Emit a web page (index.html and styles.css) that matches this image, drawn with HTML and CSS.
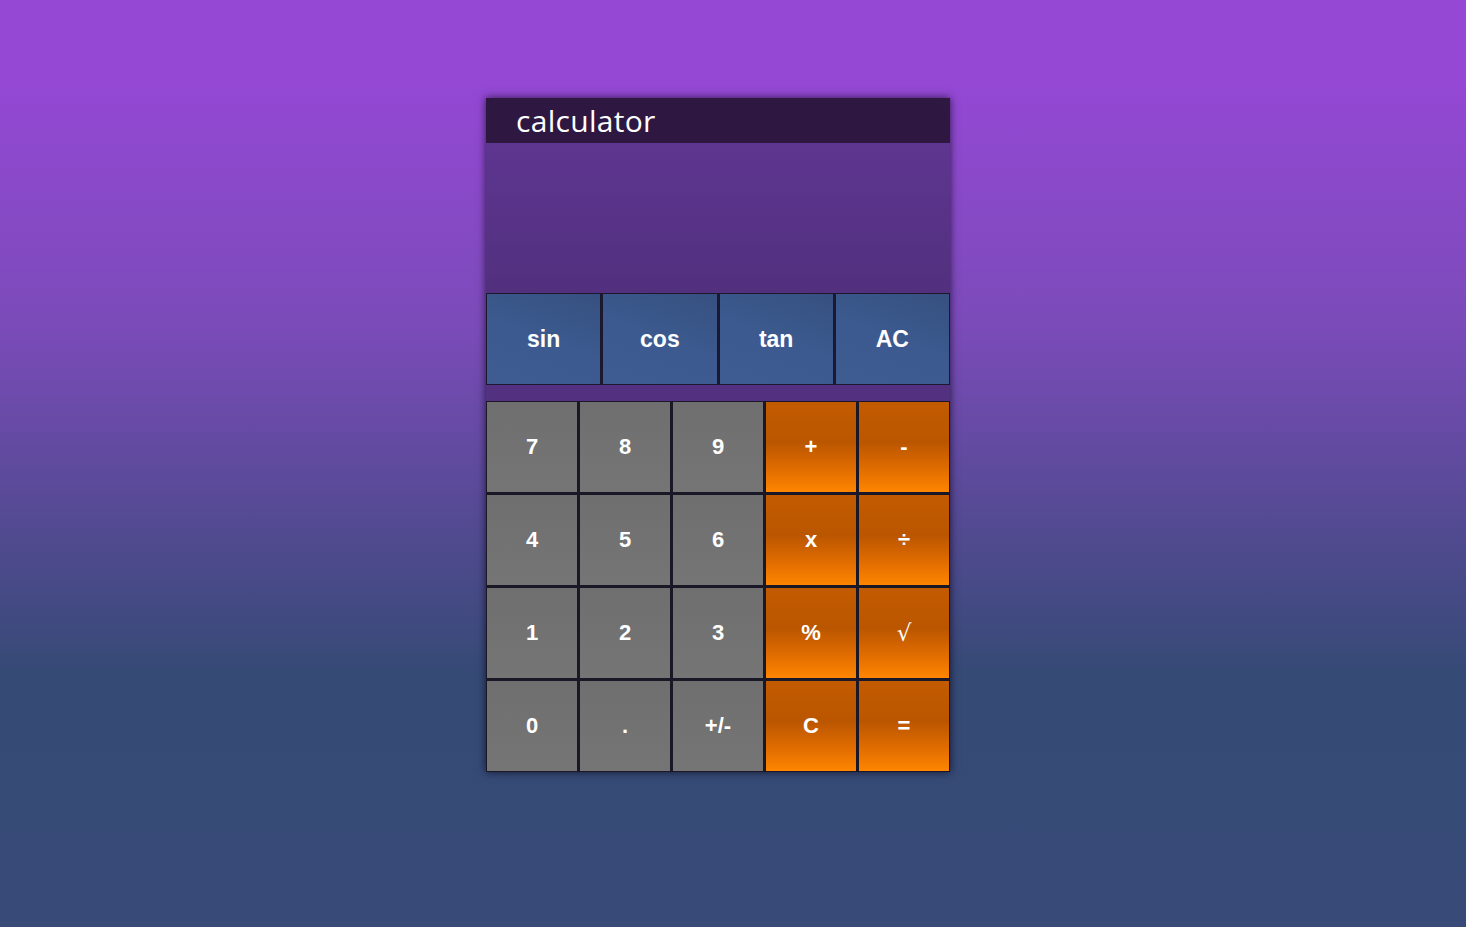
FILE: index.html
```html
<!DOCTYPE html>
<html>
<head>
<meta charset="utf-8">
<link rel="stylesheet" href="styles.css">
</head>
<body>
<div class="page">
  <div class="calc">
    <div class="title">calculator</div>
    <div class="display"></div>
    <div class="funcs">
      <button class="key fn">sin</button>
      <button class="key fn">cos</button>
      <button class="key fn">tan</button>
      <button class="key fn">AC</button>
    </div>
    <div class="pad">
      <button class="key num">7</button>
      <button class="key num">8</button>
      <button class="key num">9</button>
      <button class="key op">+</button>
      <button class="key op">-</button>
      <button class="key num">4</button>
      <button class="key num">5</button>
      <button class="key num">6</button>
      <button class="key op">x</button>
      <button class="key op">÷</button>
      <button class="key num">1</button>
      <button class="key num">2</button>
      <button class="key num">3</button>
      <button class="key op">%</button>
      <button class="key op light">√</button>
      <button class="key num">0</button>
      <button class="key num">.</button>
      <button class="key num">+/-</button>
      <button class="key op">C</button>
      <button class="key op">=</button>
    </div>
  </div>
</div>
</body>
</html>
```
FILE: styles.css
```css
html, body {
  margin: 0;
  padding: 0;
  height: 100%;
}
body {
  background: linear-gradient(to bottom, #9448d4 0%, #9448d4 9%, #7b4bb9 35%, #4d4a8c 60%, #354a75 73%, #384b78 100%);
  font-family: "Liberation Sans", Arial, sans-serif;
}
.page {
  display: flex;
  justify-content: flex-start;
  padding: 98px 0 0 486px;
}
.calc {
  width: 464px;
  display: flex;
  flex-direction: column;
  background: linear-gradient(to bottom, #5e3590 0%, #53307f 40%, #503584 60%, #4c3682 100%);
  box-shadow: 0 0 8px rgba(10, 5, 25, 0.75);
}
.title {
  height: 45px;
  background: #2e1841;
  color: #fff;
  font-family: "Open Sans", "Noto Sans", sans-serif;
  font-size: 30px;
  line-height: 45px;
  padding-left: 30px;
  letter-spacing: 0.3px;
}
.display {
  height: 150px;
  background: linear-gradient(to bottom, #5e3590, #52307e);
}
.funcs {
  display: grid;
  grid-template-columns: repeat(4, 1fr);
  grid-auto-rows: 90px;
  gap: 3px;
  padding: 1px;
  background: #1c1830;
}
.pad {
  margin-top: 16px;
  display: grid;
  grid-template-columns: repeat(5, 1fr);
  grid-auto-rows: 90px;
  gap: 3px;
  padding: 1px;
  background: #1a1726;
}
.key {
  border: none;
  margin: 0;
  padding: 0;
  color: #fff;
  font-family: "Liberation Sans", Arial, sans-serif;
  font-weight: bold;
  font-size: 23px;
  display: flex;
  align-items: center;
  justify-content: center;
}
.fn {
  background: linear-gradient(200deg, #365080 0%, #3c5a8f 50%, #3e5c92 100%);
}
.num {
  background: linear-gradient(to bottom, #6f6f6f, #757575);
  font-size: 22px;
}
.op {
  background: linear-gradient(to bottom, #c25b00 0%, #bb5600 45%, #e16d00 75%, #ff8600 100%);
  font-size: 22px;
}
.light {
  font-family: "DejaVu Sans", sans-serif;
  font-weight: normal;
  font-size: 23px;
}
```
